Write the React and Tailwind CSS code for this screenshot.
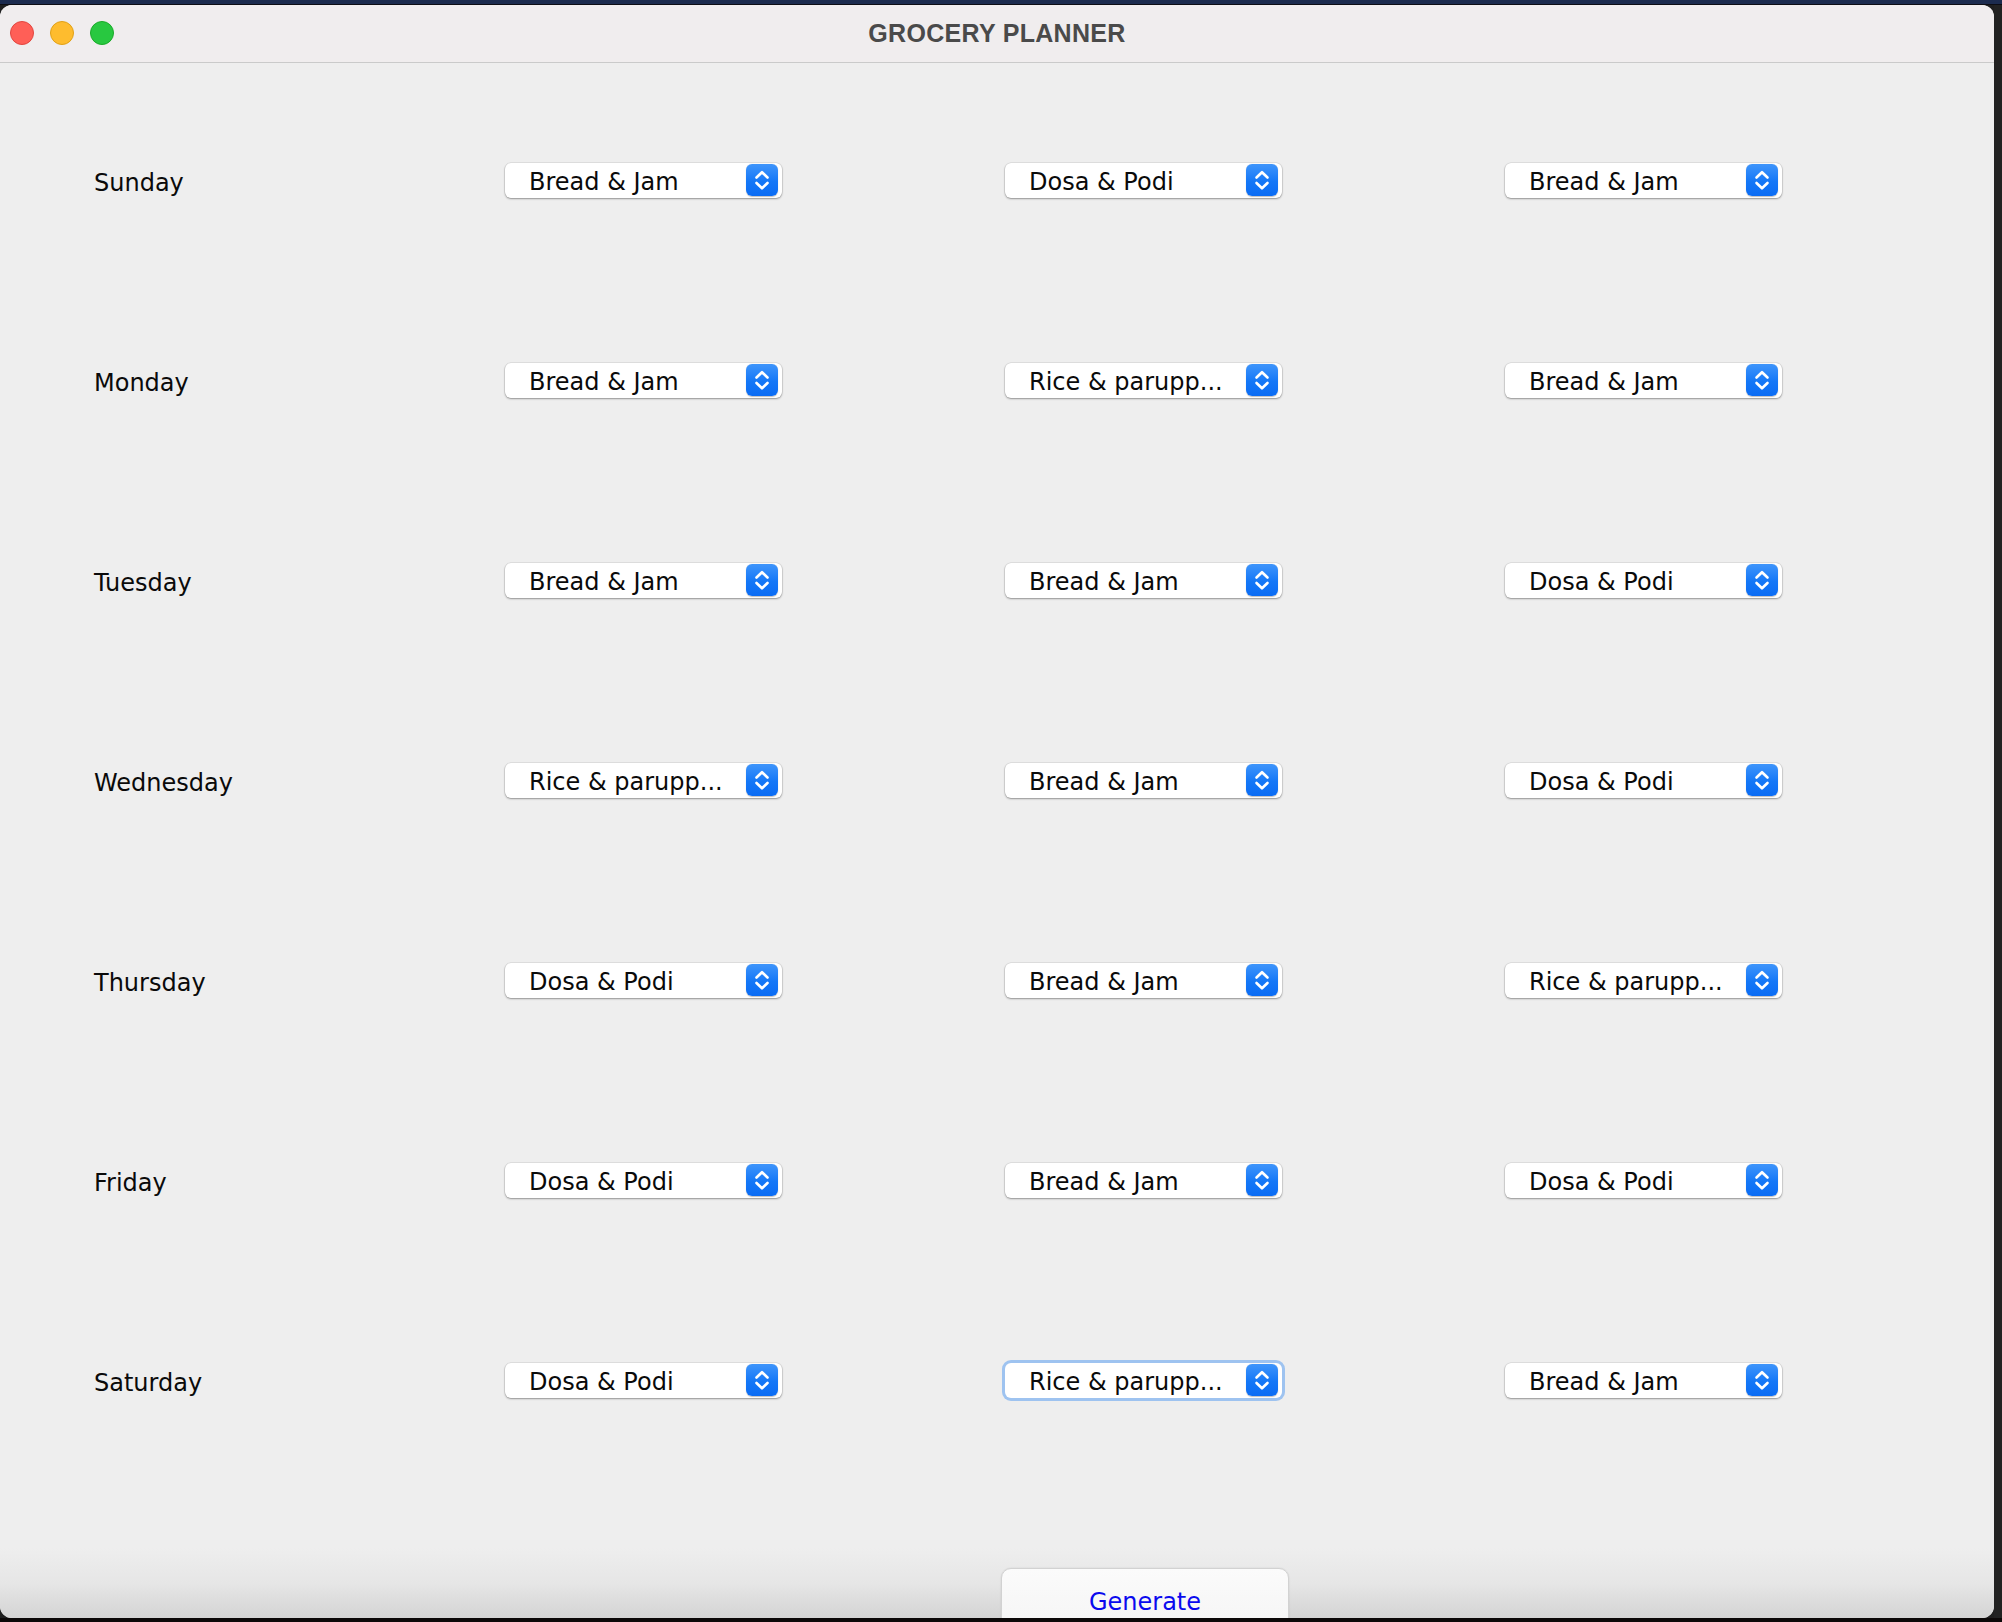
import React from "react";

const rows = [
  ["Sunday", ["Bread & Jam", "Dosa & Podi", "Bread & Jam"]],
  ["Monday", ["Bread & Jam", "Rice & parupp...", "Bread & Jam"]],
  ["Tuesday", ["Bread & Jam", "Bread & Jam", "Dosa & Podi"]],
  ["Wednesday", ["Rice & parupp...", "Bread & Jam", "Dosa & Podi"]],
  ["Thursday", ["Dosa & Podi", "Bread & Jam", "Rice & parupp..."]],
  ["Friday", ["Dosa & Podi", "Bread & Jam", "Dosa & Podi"]],
  ["Saturday", ["Dosa & Podi", "Rice & parupp...", "Bread & Jam"]],
];

function Chevrons() {
  return (
    <svg width="32" height="32" viewBox="0 0 32 32" fill="none">
      <path d="M10.5 13.5 L16 8.2 L21.5 13.5" stroke="white" strokeWidth="2.6" strokeLinecap="round" strokeLinejoin="round" />
      <path d="M10.5 19 L16 24.3 L21.5 19" stroke="white" strokeWidth="2.6" strokeLinecap="round" strokeLinejoin="round" />
    </svg>
  );
}

function Select({ value, focused }) {
  return (
    <div
      className={
        "flex h-[35px] w-[277px] items-center justify-between rounded-[6px] bg-white pl-[24px] pr-[4px] shadow-[0_1px_2px_rgba(0,0,0,0.35),0_0_0_0.5px_rgba(0,0,0,0.12)] " +
        (focused ? "ring-[3px] ring-[#9ec3f0]" : "")
      }
    >
      <span className="pt-[3px] text-[24px] leading-none text-[#0a0a0a] [font-family:'DejaVu_Sans',sans-serif]">{value}</span>
      <div className="flex h-[32px] w-[32px] items-center justify-center rounded-[6px] bg-[linear-gradient(180deg,#3f95fb_0%,#1477f7_55%,#0b6cf4_100%)] shadow-[0_0.5px_1px_rgba(0,0,0,0.25)]">
        <Chevrons />
      </div>
    </div>
  );
}

export default function App() {
  return (
    <div className="flex h-[1622px] w-[2002px] flex-col bg-[#1f1f1f] [font-family:'DejaVu_Sans',sans-serif]">
      <div className="h-[5px] w-full bg-[#1c2b4e] border-b border-[#0d0d14]" />
      <div className="flex flex-1">
        <div className="flex h-[1613px] w-[1994px] flex-col overflow-hidden rounded-[12px] bg-[#eeeeee]">
          {/* title bar */}
          <div className="relative flex h-[58px] items-center justify-center border-b border-[#cacaca] bg-[#f0edee]">
            <div className="absolute left-[10px] top-[16px] flex gap-[16px]">
              <div className="h-[24px] w-[24px] rounded-full bg-[#ff5f57] border border-[#e2463f]" />
              <div className="h-[24px] w-[24px] rounded-full bg-[#febc2e] border border-[#e1a116]" />
              <div className="h-[24px] w-[24px] rounded-full bg-[#28c840] border border-[#1aab29]" />
            </div>
            <span className="text-[25px] font-bold leading-none tracking-[0.3px] text-[#4a4a4a] [font-family:'Liberation_Sans',Arial,sans-serif]">
              GROCERY PLANNER
            </span>
          </div>
          {/* content */}
          <div className="flex flex-1 flex-col pt-[17px]">
            {rows.map(([day, vals], ri) => (
              <div key={day} className="grid h-[200px] grid-cols-[411px_500px_500px_500px] items-center pl-[94px]">
                <span className="pt-[6px] text-[24px] leading-none text-[#0a0a0a]">{day}</span>
                {vals.map((v, ci) => (
                  <div key={ci}>
                    <Select value={v} focused={ri === 6 && ci === 1} />
                  </div>
                ))}
              </div>
            ))}
          </div>
          {/* bottom bar */}
          <div className="grid h-[70px] grid-cols-[411px_500px_500px_500px] bg-[linear-gradient(180deg,#eeeeee_0%,#e6e6e6_50%,#d4d4d4_100%)] pl-[94px] pt-[20px]">
            <div />
            <div />
            <div className="-ml-[4px] flex h-[70px] w-[288px] justify-center rounded-t-[10px] border border-[#d2d2d2] bg-[linear-gradient(180deg,#fbfbfb,#f4f4f4)] pt-[21px] shadow-[0_0.5px_1.5px_rgba(0,0,0,0.15)]">
              <span className="text-[24px] leading-none text-[#0a0aee]">Generate</span>
            </div>
          </div>
        </div>
        <div className="flex-1 bg-[#222222]" />
      </div>
      <div className="h-[4px] w-full bg-[#0c0808]" />
    </div>
  );
}
